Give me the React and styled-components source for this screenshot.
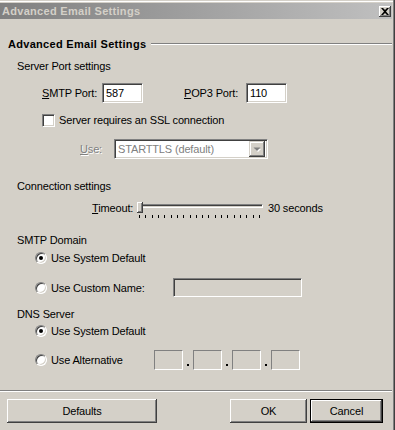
import React from 'react';
import styled, { createGlobalStyle } from 'styled-components';

const GlobalStyle = createGlobalStyle`
  html, body {
    margin: 0;
    padding: 0;
    background: #d4d0c8;
  }
  body {
    font-family: "Liberation Sans", Arial, sans-serif;
    font-size: 11px;
    letter-spacing: -0.15px;
    color: #000;
  }
`;

const Frame = styled.div`
  width: 395px;
  height: 430px;
  box-sizing: border-box;
  padding: 3px 3px 0 0;
  background: #d4d0c8;
  box-shadow: inset -1px 0 0 #404040, inset -2px 0 0 #808080,
    inset 0 1px 0 #d4d0c8, inset 0 2px 0 #fff;
  overflow: hidden;
`;

const TitleBar = styled.div`
  height: 16px;
  display: flex;
  align-items: center;
  justify-content: space-between;
  padding: 0 1px 0 2px;
  background: linear-gradient(to right, #808080, #c0c0c0);
  color: #d4d0c8;
  font-weight: bold;
  letter-spacing: 0.3px;
`;

const CloseButton = styled.div`
  width: 12px;
  height: 11px;
  display: flex;
  align-items: center;
  justify-content: center;
  background: #d4d0c8;
  box-shadow: inset -1px -1px 0 #404040, inset 1px 1px 0 #fff,
    inset -2px -2px 0 #808080;
`;

const Body = styled.div`
  display: flex;
  flex-direction: column;
  padding-top: 17px;
`;

const Heading = styled.div`
  height: 16px;
  display: flex;
  align-items: center;
  gap: 5px;
  padding-left: 8px;
  font-weight: bold;
  letter-spacing: 0.3px;
`;

const Groove = styled.div`
  flex: 1;
  height: 0;
  border-top: 1px solid #808080;
  border-bottom: 1px solid #fff;
`;

const Row = styled.div`
  display: flex;
  align-items: ${(p) => p.$align || 'center'};
  height: ${(p) => p.$h || 16}px;
  margin-top: ${(p) => p.$mt || 0}px;
  padding-left: ${(p) => p.$indent || 0}px;
  white-space: nowrap;
`;

const Label = styled.span`
  display: inline-block;
  width: ${(p) => (p.$w ? `${p.$w}px` : 'auto')};
  margin-left: ${(p) => p.$ml || 0}px;
  line-height: 16px;
  color: ${(p) => (p.$disabled ? '#808080' : '#000')};
  text-shadow: ${(p) => (p.$disabled ? '1px 1px 0 #fff' : 'none')};
`;

const Key = styled.span`
  text-decoration: underline;
`;

const TextBox = styled.div`
  box-sizing: border-box;
  width: ${(p) => p.$w}px;
  height: ${(p) => p.$h || 20}px;
  padding: 2px 3px;
  display: flex;
  align-items: center;
  background: ${(p) => (p.$disabled ? '#d4d0c8' : '#fff')};
  border: 1px solid;
  border-color: #808080 #fff #fff #808080;
  box-shadow: inset 1px 1px 0 #404040, inset -1px -1px 0 #d4d0c8;
`;

const IpBox = styled.div`
  box-sizing: border-box;
  width: 29px;
  height: 20px;
  background: #d4d0c8;
  border: 1px solid;
  border-color: #808080 #fff #fff #808080;
`;

const IpDot = styled.div`
  width: 10px;
  height: 20px;
  display: flex;
  align-items: flex-end;
  justify-content: center;
  padding-bottom: 4px;
  box-sizing: border-box;

  &::after {
    content: '';
    width: 2px;
    height: 2px;
    background: #000;
  }
`;

const Check = styled.div`
  box-sizing: border-box;
  width: 13px;
  height: 13px;
  margin-right: 4px;
  background: #fff;
  border: 1px solid;
  border-color: #808080 #fff #fff #808080;
  box-shadow: inset 1px 1px 0 #404040, inset -1px -1px 0 #d4d0c8;
`;

const Radio = styled.div`
  box-sizing: border-box;
  width: 12px;
  height: 12px;
  margin-right: 4px;
  border-radius: 50%;
  background: #fff;
  border: 1px solid;
  border-color: #808080 #fff #fff #808080;
  box-shadow: inset 1px 1px 0 #404040, inset -1px -1px 0 #d4d0c8;
  display: flex;
  align-items: center;
  justify-content: center;

  &::after {
    content: '';
    width: 4px;
    height: 4px;
    border-radius: 50%;
    background: ${(p) => (p.$checked ? '#000' : 'transparent')};
  }
`;

const Combo = styled.div`
  box-sizing: border-box;
  width: 154px;
  height: 20px;
  display: flex;
  align-items: center;
  justify-content: space-between;
  padding: 2px 2px 2px 3px;
  background: #fff;
  color: #808080;
  border: 1px solid;
  border-color: #808080 #fff #fff #808080;
  box-shadow: inset 1px 1px 0 #404040, inset -1px -1px 0 #d4d0c8;
`;

const ComboArrow = styled.div`
  width: 16px;
  height: 16px;
  display: flex;
  align-items: center;
  justify-content: center;
  background: #d4d0c8;
  box-shadow: inset -1px -1px 0 #404040, inset 1px 1px 0 #d4d0c8,
    inset -2px -2px 0 #808080, inset 2px 2px 0 #fff;
`;

const Slider = styled.div`
  width: 126px;
  display: flex;
  flex-direction: column;
  margin-right: 5px;
`;

const TrackArea = styled.div`
  position: relative;
  height: 15px;
  padding-top: 4px;
  box-sizing: border-box;
`;

const Track = styled.div`
  height: 4px;
  box-sizing: border-box;
  border-top: 1px solid #808080;
  border-bottom: 1px solid #fff;
  border-left: 1px solid #808080;
  border-right: 1px solid #fff;
  box-shadow: inset 0 1px 0 #404040;
  background: #d4d0c8;
`;

const Thumb = styled.div`
  position: absolute;
  left: 0;
  top: 2px;
  width: 6px;
  height: 11px;
  background: #d4d0c8;
  box-shadow: inset -1px -1px 0 #404040, inset 1px 1px 0 #fff,
    inset -2px -2px 0 #808080;
`;

const Ticks = styled.div`
  width: 121px;
  height: 3px;
  margin-left: 2px;
  display: flex;
  justify-content: space-between;
`;

const Tick = styled.div`
  width: 1px;
  height: 3px;
  background: #000;
`;

const Separator = styled.div`
  margin-top: 20px;
  height: 0;
  border-top: 1px solid #808080;
  border-bottom: 1px solid #fff;
`;

const ButtonRow = styled.div`
  display: flex;
  align-items: center;
  height: 24px;
  margin-top: 7px;
  padding: 0 9px 0 7px;
`;

const Button = styled.div`
  box-sizing: border-box;
  width: ${(p) => p.$w}px;
  height: 24px;
  margin-left: ${(p) => p.$ml || '0px'};
  display: flex;
  align-items: center;
  justify-content: center;
  background: #d4d0c8;
  border: ${(p) => (p.$default ? '1px solid #000' : 'none')};
  box-shadow: inset -1px -1px 0 #404040, inset 1px 1px 0 #fff,
    inset -2px -2px 0 #808080;
`;

const App = () => {
  const ticks = Array.from({ length: 20 });
  return (
    <>
      <GlobalStyle />
      <Frame>
        <TitleBar>
          <span>Advanced Email Settings</span>
          <CloseButton>
            <svg width="8" height="7" viewBox="0 0 8 7">
              <path d="M0 0h2l2 2 2-2h2L5 3.5 8 7H6L4 5 2 7H0l3-3.5z" fill="#000" />
            </svg>
          </CloseButton>
        </TitleBar>
        <Body>
          <Heading>
            <span>Advanced Email Settings</span>
            <Groove />
          </Heading>

          <Row $mt={6} $indent={17}>
            <Label>Server Port settings</Label>
          </Row>

          <Row $mt={9} $h={20} $indent={42}>
            <Label $w={60}>
              <Key>S</Key>MTP Port:
            </Label>
            <TextBox $w={41}>587</TextBox>
            <Label $w={62} $ml={41}>
              <Key>P</Key>OP3 Port:
            </Label>
            <TextBox $w={41}>110</TextBox>
          </Row>

          <Row $mt={9} $indent={42}>
            <Check />
            <Label>Server requires an SSL connection</Label>
          </Row>

          <Row $mt={11} $h={20} $indent={80}>
            <Label $w={34} $disabled>
              <Key>U</Key>se:
            </Label>
            <Combo>
              <span>STARTTLS (default)</span>
              <ComboArrow>
                <svg width="8" height="5" viewBox="0 0 8 5">
                  <path d="M1 1h6L4 4z" fill="#fff" transform="translate(1 1)" />
                  <path d="M0 0h7L3.5 3.5z" fill="#808080" transform="translate(0.5 0.5)" />
                </svg>
              </ComboArrow>
            </Combo>
          </Row>

          <Row $mt={19} $indent={17}>
            <Label>Connection settings</Label>
          </Row>

          <Row $mt={6} $h={22} $align="flex-start" $indent={92}>
            <Label $w={45}>
              <Key>T</Key>imeout:
            </Label>
            <Slider>
              <TrackArea>
                <Track />
                <Thumb />
              </TrackArea>
              <Ticks>
                {ticks.map((_, i) => (
                  <Tick key={i} />
                ))}
              </Ticks>
            </Slider>
            <Label>30 seconds</Label>
          </Row>

          <Row $mt={10} $indent={17}>
            <Label>SMTP Domain</Label>
          </Row>

          <Row $mt={2} $indent={35}>
            <Radio $checked />
            <Label>Use System Default</Label>
          </Row>

          <Row $mt={12} $h={19} $indent={35}>
            <Radio />
            <Label $w={122}>Use Custom Name:</Label>
            <TextBox $w={129} $h={19} $disabled />
          </Row>

          <Row $mt={9} $indent={17}>
            <Label>DNS Server</Label>
          </Row>

          <Row $mt={1} $indent={35}>
            <Radio $checked />
            <Label>Use System Default</Label>
          </Row>

          <Row $mt={11} $h={20} $indent={35}>
            <Radio />
            <Label $w={103}>Use Alternative</Label>
            <IpBox />
            <IpDot />
            <IpBox />
            <IpDot />
            <IpBox />
            <IpDot />
            <IpBox />
          </Row>

          <Separator />

          <ButtonRow>
            <Button $w={150}>Defaults</Button>
            <Button $w={77} $ml="auto">OK</Button>
            <Button $w={73} $ml="3px" $default>Cancel</Button>
          </ButtonRow>
        </Body>
      </Frame>
    </>
  );
};

export default App;
